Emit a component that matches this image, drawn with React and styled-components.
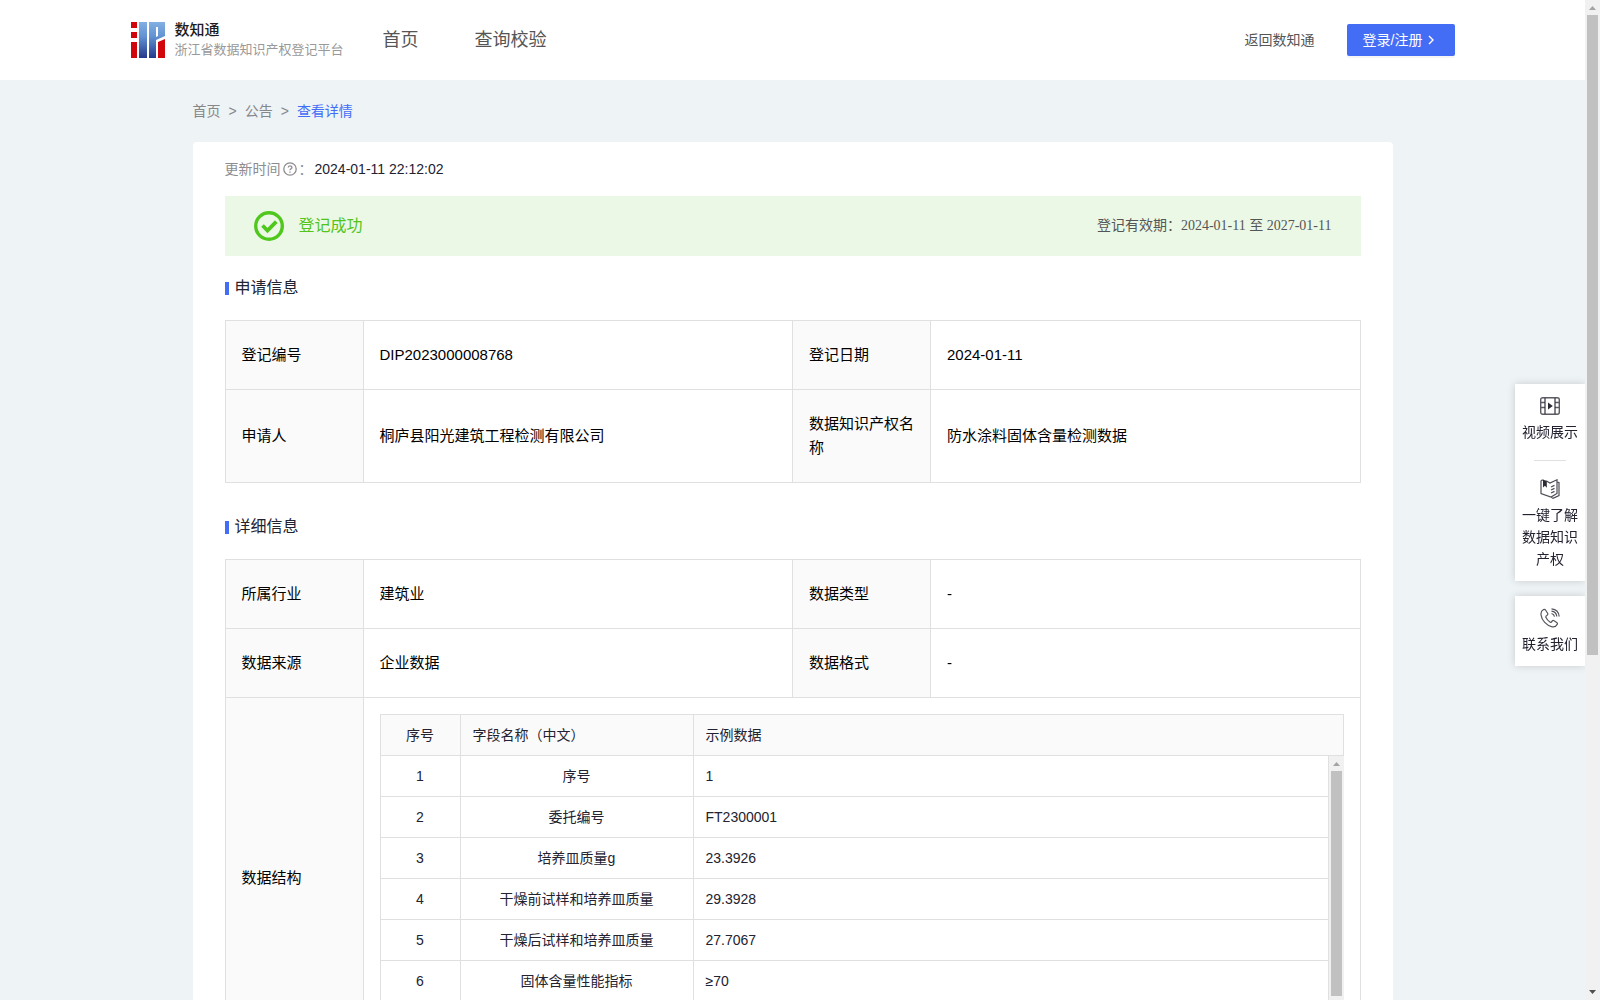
import styled, { createGlobalStyle } from "styled-components"

const fields = [
    { name: "序号", example: "1" },
    { name: "委托编号", example: "FT2300001" },
    { name: "培养皿质量g", example: "23.3926" },
    { name: "干燥前试样和培养皿质量", example: "29.3928" },
    { name: "干燥后试样和培养皿质量", example: "27.7067" },
    { name: "固体含量性能指标", example: "≥70" },
]

export default function App() {
    return (
        <Window>
            <GlobalStyle />
            <Page>
                <Header />
                <Content>
                    <Breadcrumb aria-label="breadcrumb">
                        <a href="#home">首页</a>
                        <span>&gt;</span>
                        <a href="#notice">公告</a>
                        <span>&gt;</span>
                        <a href="#detail" aria-current="page">查看详情</a>
                    </Breadcrumb>
                    <Card>
                        <UpdateTime>
                            <span>更新时间</span>
                            <QuestionIcon />
                            <span>：</span>
                            <time>2024-01-11 22:12:02</time>
                        </UpdateTime>
                        <Banner>
                            <CheckIcon />
                            <strong>登记成功</strong>
                            <Validity>登记有效期：2024-01-11 至 2027-01-11</Validity>
                        </Banner>

                        <SectionTitle>申请信息</SectionTitle>
                        <InfoTable>
                            <InfoCols />
                            <tbody>
                                <tr>
                                    <th>登记编号</th>
                                    <td>DIP2023000008768</td>
                                    <th>登记日期</th>
                                    <td>2024-01-11</td>
                                </tr>
                                <tr>
                                    <th>申请人</th>
                                    <td>桐庐县阳光建筑工程检测有限公司</td>
                                    <th>数据知识产权名称</th>
                                    <td>防水涂料固体含量检测数据</td>
                                </tr>
                            </tbody>
                        </InfoTable>

                        <SectionTitle>详细信息</SectionTitle>
                        <InfoTable>
                            <InfoCols />
                            <tbody>
                                <tr>
                                    <th>所属行业</th>
                                    <td>建筑业</td>
                                    <th>数据类型</th>
                                    <td>-</td>
                                </tr>
                                <tr>
                                    <th>数据来源</th>
                                    <td>企业数据</td>
                                    <th>数据格式</th>
                                    <td>-</td>
                                </tr>
                                <tr>
                                    <th>数据结构</th>
                                    <NestedCell colSpan={3}>
                                        <FieldTable />
                                    </NestedCell>
                                </tr>
                            </tbody>
                        </InfoTable>
                    </Card>
                </Content>
            </Page>
            <Scrollbar size={66} />
            <SideBar />
        </Window>
    )
}

function Header() {
    return (
        <HeaderBar>
            <HeaderInner>
                <Brand href="#home">
                    <Logo />
                    <div>
                        <BrandName>数知通</BrandName>
                        <BrandText>浙江省数据知识产权登记平台</BrandText>
                    </div>
                </Brand>
                <Nav>
                    <a href="#home">首页</a>
                    <a href="#search">查询校验</a>
                </Nav>
                <BackLink href="#back">返回数知通</BackLink>
                <LoginButton type="button">
                    登录/注册
                    <svg width="8" height="10" viewBox="0 0 8 10" fill="none" stroke="#fff" strokeWidth="1.4">
                        <path d="M1 1l4 4-4 4" />
                    </svg>
                </LoginButton>
            </HeaderInner>
        </HeaderBar>
    )
}

function InfoCols() {
    return (
        <colgroup>
            <LabelCol />
            <col />
            <LabelCol />
            <col />
        </colgroup>
    )
}

function FieldCols() {
    return (
        <colgroup>
            <IndexCol />
            <NameCol />
            <col />
        </colgroup>
    )
}

function FieldTable() {
    return (
        <div>
            <FieldHead>
                <FieldGrid>
                    <FieldCols />
                    <thead>
                        <tr>
                            <th>序号</th>
                            <th>字段名称（中文）</th>
                            <th>示例数据</th>
                        </tr>
                    </thead>
                </FieldGrid>
            </FieldHead>
            <FieldBody>
                <FieldScroll>
                    <FieldGrid>
                        <FieldCols />
                        <tbody>
                            {fields.map((field, i) => (
                                <tr key={field.name}>
                                    <td>{i + 1}</td>
                                    <td>{field.name}</td>
                                    <td>{field.example}</td>
                                </tr>
                            ))}
                        </tbody>
                    </FieldGrid>
                </FieldScroll>
                <Scrollbar size={88} />
            </FieldBody>
        </div>
    )
}

function Scrollbar({ size }) {
    return (
        <ScrollTrack aria-hidden="true">
            <svg width="15" height="15"><path d="M4 10l3.500-4 3.500 4z" fill="#a3a3a3" /></svg>
            <ScrollRail><ScrollThumb $size={size} /></ScrollRail>
            <svg width="15" height="15"><path d="M4 5l3.500 4 3.500-4z" fill="#505050" /></svg>
        </ScrollTrack>
    )
}

function SideBar() {
    return (
        <SideStack>
            <SideGroup>
                <SideItem href="#video"><FilmIcon />视频展示</SideItem>
                <SideItem href="#guide"><BookIcon />一键了解数据知识产权</SideItem>
            </SideGroup>
            <SideGroup>
                <SideItem href="#contact"><PhoneIcon />联系我们</SideItem>
            </SideGroup>
        </SideStack>
    )
}

function Logo() {
    return (
        <svg width="34" height="36" viewBox="0 0 34 36">
            <defs>
                <linearGradient id="logoBlue" x1="0" y1="0" x2="0" y2="36" gradientUnits="userSpaceOnUse">
                    <stop offset="0" stopColor="#82b0e4" />
                    <stop offset="0.4" stopColor="#6292d2" />
                    <stop offset="1" stopColor="#24388a" />
                </linearGradient>
            </defs>
            <path d="M0 0h6v6H0zM0 10h6v6H0zM0 20h6v16H0zM27 20l7-3v19h-7z" fill="#d0060c" />
            <path d="M8 0h8v36H8zM18 0h16v14l-9 4v18h-7zM25 5v10l2-1V5z" fill="url(#logoBlue)" fillRule="evenodd" />
        </svg>
    )
}

function QuestionIcon() {
    return (
        <svg width="14" height="14" viewBox="0 0 14 14" fill="none" stroke="#8c8c91" strokeWidth="1.3">
            <circle cx="7" cy="7" r="6.2" />
            <path d="M5.200 5.600c0-2.400 3.700-2.300 3.700-.2 0 1.300-1.900 1.300-1.900 2.900" />
            <path d="M7 9.400v1.300" />
        </svg>
    )
}

function CheckIcon() {
    return (
        <svg width="30" height="30" viewBox="0 0 30 30" fill="none" stroke="#4fc71c">
            <circle cx="15" cy="15" r="13.3" strokeWidth="3.4" />
            <path d="M8.500 14.500l5 5 8.800-8.800" strokeWidth="3.8" />
        </svg>
    )
}

function FilmIcon() {
    return (
        <svg width="20" height="20" viewBox="0 0 20 20" fill="none" stroke="#5b5b63" strokeWidth="1.4">
            <rect x="0.7" y="1.7" width="18.6" height="16.600" rx="2" />
            <path d="M1 6.500h4M1 11.500h4M15 6.500h4M15 11.500h4" />
            <path d="M5 2v16M15 2v16" stroke="#33333c" strokeWidth="1.2" />
            <path d="M8 6.500v7l4.800-3.500z" fill="#2b2b35" stroke="none" />
        </svg>
    )
}

function BookIcon() {
    return (
        <svg width="20" height="20" viewBox="0 0 20 20" fill="none" stroke="#4c4c55" strokeWidth="1.2">
            <path d="M1 1.500l2.500-.7M6.500 2L10 4l7-3.200v13.600L11 18l-10-3.500v-13M17 3l2 .5v13L13 19.200l-2-1.200" />
            <path d="M3 .8v7.700l1.900-1.700 1.900 2V1.800z" fill="#2b2b35" stroke="none" />
            <path d="M11 8l3.500-1.600M11 11l3.500-1.600M11 14l3.500-1.600" />
        </svg>
    )
}

function PhoneIcon() {
    return (
        <svg width="20" height="20" viewBox="0 0 20 20" fill="none" stroke="#55555d" strokeWidth="1.2">
            <path d="M3.500 1.600C1.600 2.700.7 4.500 1 6.800c.8 5.600 5.300 10.700 11.200 12 2.200.4 4-.6 5-2.400.4-.8.2-1.500-.5-2l-2.600-1.700c-.7-.4-1.400-.3-1.900.3l-.8 1c-.5.5-1 .4-1.500 0-1.700-1.200-3-2.700-3.900-4.600-.3-.6-.2-1.100.3-1.500l1-.8c.6-.5.7-1.100.3-1.800L5.700 2.200c-.5-.8-1.300-1-2.200-.6z" />
            <path d="M11.500 5.500c1.800.4 2.700 1.400 3 3.200M11.500 3.200c3.200.4 5 2.300 5.300 5.300M11.500.9c4.500.4 7.200 3 7.700 7.600" />
        </svg>
    )
}

const GlobalStyle = createGlobalStyle`
    * {
        box-sizing: border-box;
    }
    body {
        margin: 0;
        background: #eef3f6;
        color: #222230;
        font-family: "Liberation Sans", "Noto Sans CJK SC", sans-serif;
        font-size: 14px;
        line-height: 22px;
    }
    a {
        color: inherit;
        text-decoration: none;
    }
    svg {
        display: block;
        flex-shrink: 0;
    }
`
const Window = styled.div`
    display: flex;
    height: 100vh;
`
const Page = styled.div`
    flex: 1;
    min-width: 0;
    overflow-y: auto;
    scrollbar-width: none;
`
const HeaderBar = styled.header`
    background: #fff;
`
const HeaderInner = styled.div`
    display: flex;
    align-items: center;
    max-width: 1324px;
    height: 80px;
    margin: 0 auto;
`
const Brand = styled.a`
    display: flex;
    align-items: center;
    gap: 10px;
    width: 252px;
`
const BrandName = styled.div`
    font-size: 15px;
    font-weight: 500;
    line-height: 20px;
    color: #1c1c1c;
`
const BrandText = styled.div`
    font-size: 13px;
    line-height: 20px;
    color: #999;
    white-space: nowrap;
`
const Nav = styled.nav`
    display: flex;
    flex: 1;
    gap: 56px;
    font-size: 18px;
    color: #555;
`
const BackLink = styled.a`
    margin-right: 32px;
    color: #555;
`
const LoginButton = styled.button`
    display: flex;
    align-items: center;
    gap: 6px;
    width: 108px;
    height: 32px;
    padding: 0 16px;
    border: none;
    border-radius: 2px;
    background: #446df6;
    box-shadow: 0 2px 0 rgba(0, 0, 0, 0.04);
    color: #fff;
    font: inherit;
    white-space: nowrap;
    cursor: pointer;
`
const Content = styled.main`
    max-width: 1200px;
    margin: 0 auto;
`
const Breadcrumb = styled.nav`
    display: flex;
    align-items: center;
    gap: 8px;
    height: 62px;
    color: #86868b;

    a[aria-current] {
        color: #446df6;
    }
`
const Card = styled.section`
    padding: 16px 32px 32px;
    border-radius: 4px;
    background: #fff;
`
const UpdateTime = styled.div`
    display: flex;
    align-items: center;
    height: 22px;
    gap: 2px;
    color: #8c8c91;

    time {
        color: #222230;
    }
`
const Banner = styled.div`
    display: flex;
    align-items: center;
    gap: 15px;
    height: 60px;
    margin-top: 16px;
    padding: 0 29px;
    background: #ecf8e6;

    strong {
        flex: 1;
        font-size: 16px;
        font-weight: 400;
        color: #52c41a;
    }
`
const Validity = styled.span`
    font-family: "Liberation Serif", "Noto Sans CJK SC", serif;
    color: #555;
`
const SectionTitle = styled.h2`
    display: flex;
    align-items: center;
    gap: 6px;
    height: 24px;
    margin: 20px 0;
    font-size: 16px;
    font-weight: 400;

    &::before {
        content: "";
        width: 4px;
        height: 13px;
        background: #446df6;
    }

    table + & {
        margin-top: 32px;
    }
`
const InfoTable = styled.table`
    width: 100%;
    table-layout: fixed;
    border-collapse: collapse;
    font-size: 15px;
    line-height: 24px;
    color: #000;

    th, td {
        padding: 22px 16px;
        border: 1px solid #e0e0e0;
        text-align: left;
        font-weight: 400;
    }
    th {
        background: #fafafa;
    }
`
const LabelCol = styled.col`
    width: 138px;
`
const NestedCell = styled.td`
    && {
        padding: 16px;
    }
`
const FieldHead = styled.div`
    border: 1px solid #e0e0e0;
    background: #fafafa;
`
const FieldBody = styled.div`
    display: flex;
    height: 286px;
    border-left: 1px solid #e0e0e0;
`
const FieldScroll = styled.div`
    flex: 1;
    border-right: 1px solid #e0e0e0;
    overflow-y: auto;
    scrollbar-width: none;
`
const FieldGrid = styled.table`
    width: 100%;
    table-layout: fixed;
    border-collapse: separate;
    border-spacing: 0;
    font-size: 14px;
    line-height: 22px;
    color: #222230;

    && th, && td {
        padding: 9px 12px;
        border: none;
        border-right: 1px solid #e0e0e0;
    }
    && td {
        border-bottom: 1px solid #e0e0e0;
    }
    && tr > :last-child {
        border-right: none;
    }
    && tr > :first-child, && td:nth-child(2) {
        text-align: center;
    }
`
const IndexCol = styled.col`
    width: 80px;
`
const NameCol = styled.col`
    width: 233px;
`
const ScrollTrack = styled.div`
    display: flex;
    flex-direction: column;
    width: 15px;
    background: #f1f1f1;
`
const ScrollRail = styled.div`
    flex: 1;
    padding: 0 2px;
`
const ScrollThumb = styled.div`
    height: ${(props) => props.$size}%;
    background: #c1c1c1;
`
const SideStack = styled.aside`
    position: fixed;
    top: 384px;
    right: 15px;
    display: flex;
    flex-direction: column;
    gap: 15px;
    width: 70px;
    clip-path: inset(-12px 0 -12px -12px);
`
const SideGroup = styled.div`
    display: flex;
    flex-direction: column;
    padding: 12px 7px 11px;
    background: #fff;
    box-shadow: 0 0 8px rgba(0, 0, 0, 0.16);
`
const SideItem = styled.a`
    display: flex;
    flex-direction: column;
    align-items: center;
    gap: 5px;
    text-align: center;

    & + &::before {
        content: "";
        width: 32px;
        height: 1px;
        margin: 17px 0 13px;
        background: #e0e0e0;
    }
`
